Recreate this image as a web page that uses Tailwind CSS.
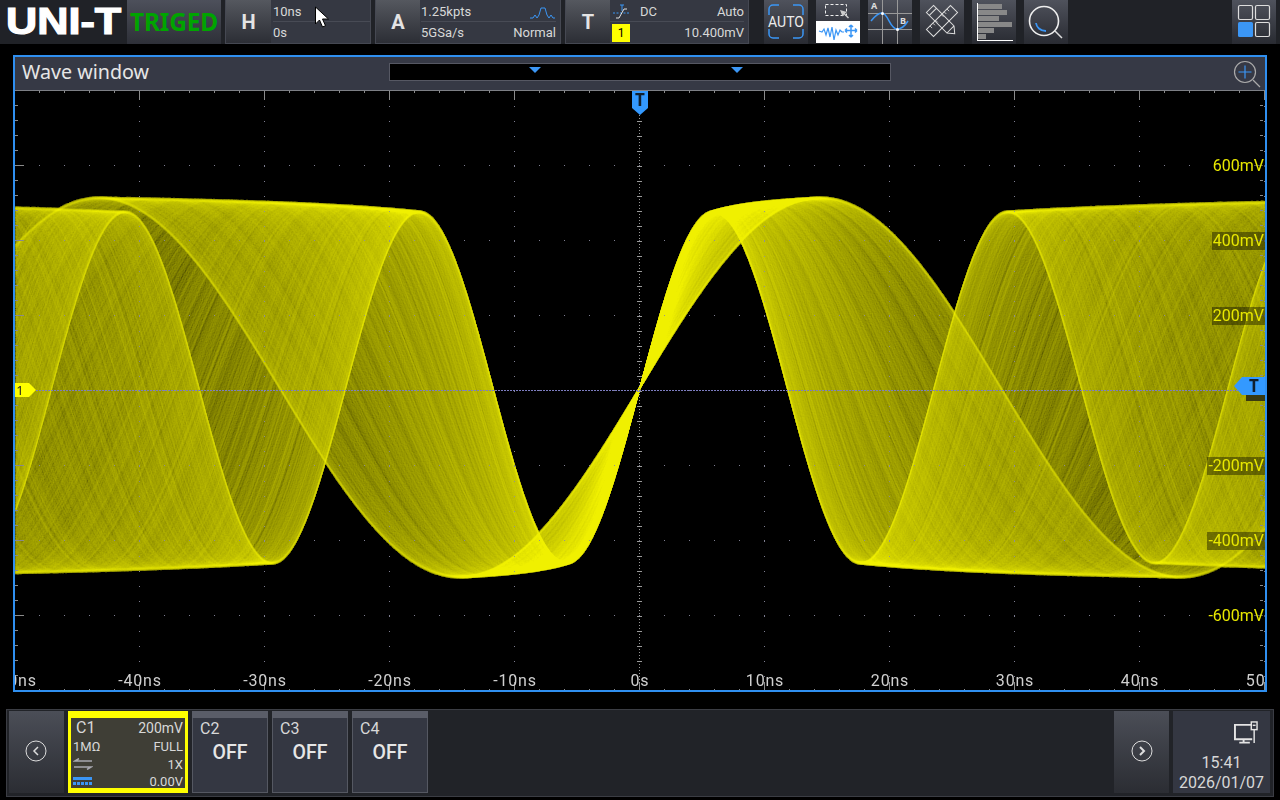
<!DOCTYPE html>
<html lang="en">
<head>
  <meta charset="UTF-8">
  <title>Wave window</title>
  <script src="https://cdn.jsdelivr.net/npm/@tailwindcss/browser@4"></script>
</head>
<body class="w-[1280px] h-[800px] overflow-hidden bg-black font-['Roboto',sans-serif] text-[#d8d8d8]">

  <!-- Top bar -->
  <div class="relative flex h-[44px] bg-[#202227]">
    <div class="w-[127px] h-full overflow-hidden flex items-center">
      <span class="ml-[6px] origin-left scale-x-[1.2] font-['Liberation_Sans',sans-serif] font-bold text-[36px] leading-none [-webkit-text-stroke:1.2px_white] text-white">UNI-T</span>
    </div>
    <div class="w-[94px] h-full bg-gradient-to-b from-[#4d505b] to-[#2e3038] flex items-center justify-center">
      <span class="font-['Noto_Sans',sans-serif] font-bold text-[24.500px] text-[#00a400] tracking-[-0.2px]">TRIGED</span>
    </div>

    <!-- H -->
    <div class="ml-[4px] w-[146px] h-full flex bg-[#353842] border border-[#454852] border-t-0">
      <div class="w-[45px] bg-gradient-to-b from-[#55585f] to-[#2c2e35] flex items-center justify-center text-[20px] font-bold text-[#e4e4e4]">H</div>
      <div class="flex-1 flex flex-col text-[13px] pl-[2px]">
        <div class="h-[22px] pt-[2px] flex items-center border-b border-[#484b55]">10ns</div>
        <div class="h-[21px] pt-[1px] flex items-center">0s</div>
      </div>
    </div>

    <!-- A -->
    <div class="ml-[4px] w-[186px] h-full flex bg-[#353842] border border-[#454852] border-t-0">
      <div class="w-[44px] bg-gradient-to-b from-[#55585f] to-[#2c2e35] flex items-center justify-center text-[20px] font-bold text-[#e4e4e4]">A</div>
      <div class="flex-1 flex flex-col text-[13px] pl-[1px] pr-[4px]">
        <div class="h-[22px] pt-[2px] flex items-center justify-between border-b border-[#484b55]">
          <span>1.25kpts</span>
          <svg width="26" height="14" viewBox="0 0 26 14" fill="none" stroke="#3b96f5" stroke-width="1"><path d="M0 13h3l2-3 2 3 2-3 2-7h4l2 7 2 3 2-3 2 3h2"/></svg>
        </div>
        <div class="h-[21px] pt-[1px] flex items-center justify-between"><span>5GSa/s</span><span>Normal</span></div>
      </div>
    </div>

    <!-- T -->
    <div class="ml-[4px] w-[184px] h-full flex bg-[#353842] border border-[#454852] border-t-0">
      <div class="w-[44px] bg-gradient-to-b from-[#55585f] to-[#2c2e35] flex items-center justify-center text-[20px] font-bold text-[#e4e4e4]">T</div>
      <div class="flex-1 flex flex-col text-[13px] pr-[4px]">
        <div class="h-[22px] pt-[2px] flex items-center justify-between border-b border-[#484b55]">
          <span class="flex items-center gap-[10px] ml-[3px]">
            <svg width="17" height="16" viewBox="0 0 17 16" fill="none"><path d="M0 9h17" stroke="#3b96f5" stroke-dasharray="2 1.5"/><path d="M7 1h4M9 1v6" stroke="#3b96f5"/><path d="M3 14h3l5-9h3" stroke="#e0e0e0"/></svg>
            <span>DC</span>
          </span>
          <span>Auto</span>
        </div>
        <div class="h-[21px] flex items-center justify-between">
          <span class="ml-[2px] w-[18px] h-[18px] bg-[#ffff00] text-black text-[12px] flex items-center justify-center">1</span>
          <span>10.400mV</span>
        </div>
      </div>
    </div>

    <!-- Tool icons -->
    <div class="ml-[15px] flex gap-[8px] h-full">
      <div class="relative w-[44px] h-full bg-gradient-to-b from-[#4f525c] to-[#292b32] flex items-center justify-center">
        <svg class="absolute inset-0" width="44" height="44" viewBox="0 0 44 44" fill="none" stroke="#3b96f5" stroke-width="1.500"><path d="M5 15V9a4 4 0 0 1 4-4h6M29 5h6a4 4 0 0 1 4 4v6M5 29v5a4 4 0 0 0 4 4h6M29 38h6a4 4 0 0 0 4-4v-5"/></svg>
        <span class="relative text-[14px] text-[#ececec]">AUTO</span>
      </div>
      <div class="w-[44px] h-full flex flex-col">
        <div class="h-[21px] bg-gradient-to-b from-[#4f525c] to-[#383a43]">
          <svg width="44" height="21" viewBox="0 0 44 21" fill="none" stroke="#eee"><rect x="9.500" y="4.500" width="21" height="11" stroke-dasharray="3 2"/><path d="M24 10l7 2-2 1.500 4 4-1 1-4-4-1.500 2z" fill="#ccc" stroke="none"/></svg>
        </div>
        <div class="h-[22px] bg-white">
          <svg width="44" height="22" viewBox="0 0 44 22" fill="none" stroke="#3b96f5"><path d="M3 10l3 1 2-3 2 6 2-7 2 9 2-10 2 13 2-10 2 5 2-5 2 2h2" stroke-width="1.200"/><path d="M29 9.500h12M35 4v12M29 9.500l2-2M29 9.500l2 2M41 9.500l-2-2M41 9.500l-2 2M35 4l-2 2M35 4l2 2M35 16l-2-2M35 16l2-2" stroke-width="1.500"/></svg>
        </div>
      </div>
      <div class="w-[44px] h-full bg-gradient-to-b from-[#4f525c] to-[#292b32]">
        <svg width="44" height="44" viewBox="0 0 44 44" fill="none">
          <path d="M0 13.500h44M0 29.500h44M14.500 0v44M29.500 0v44" stroke="#999"/>
          <path d="M3 21c4-5 7-8 11-8 6 0 8 16 15 16 5 0 8-3 11-8" stroke="#3b96f5" stroke-width="1.500"/>
          <circle cx="14.500" cy="13.500" r="1.500" fill="#fff"/><circle cx="29.500" cy="29.500" r="1.500" fill="#fff"/>
          <text x="3" y="9" font-size="9" fill="#ddd" font-family="Noto Sans, sans-serif" font-weight="700">A</text>
          <text x="32" y="24" font-size="9" fill="#ddd" font-family="Noto Sans, sans-serif" font-weight="700">B</text>
        </svg>
      </div>
      <div class="w-[44px] h-full bg-gradient-to-b from-[#4f525c] to-[#292b32]">
        <svg width="44" height="44" viewBox="0 0 44 44" fill="none" stroke="#ddd">
          <g transform="rotate(-45 22 21)"><rect x="5" y="16" width="34" height="10"/><path d="M10 16v3M14 16v3M18 16v3M26 16v3M30 16v3M34 16v3" stroke-width=".8"/></g>
          <g transform="rotate(45 22 21)"><path d="M5 16h29l6 5-6 5H5zM34 16v10M9 16v10"/></g>
        </svg>
      </div>
      <div class="w-[44px] h-full bg-gradient-to-b from-[#4f525c] to-[#292b32] relative">
        <div class="absolute left-[5px] top-[3px] h-[38px] w-[36px] border-l border-b border-white flex flex-col justify-end pb-[1px] gap-[1px]">
          <div class="h-[5px] w-[24px] bg-[#888]"></div>
          <div class="h-[5px] w-[29px] bg-[#888]"></div>
          <div class="h-[5px] w-[21px] bg-[#888]"></div>
          <div class="h-[5px] w-[34px] bg-[#888]"></div>
          <div class="h-[5px] w-[16px] bg-[#888]"></div>
          <div class="h-[5px] w-[8px] bg-[#888]"></div>
        </div>
      </div>
      <div class="w-[44px] h-full bg-gradient-to-b from-[#4f525c] to-[#292b32]">
        <svg width="44" height="44" viewBox="0 0 44 44" fill="none">
          <circle cx="20" cy="21" r="14.500" stroke="#eee" stroke-width="1.600"/>
          <path d="M31 31l7 7" stroke="#ddd" stroke-width="1.500"/>
          <path d="M12 23c.5 4 4 8 10 8" stroke="#3b96f5" stroke-width="1.800"/>
        </svg>
      </div>
    </div>

    <div class="absolute left-[1232px] top-0 w-[44px] h-full bg-gradient-to-b from-[#4f525c] to-[#292b32]">
      <svg width="44" height="44" viewBox="0 0 44 44" fill="none" stroke="#ddd" stroke-width="1.200">
        <rect x="6.500" y="5.500" width="14" height="14" rx="1.500"/>
        <rect x="23.500" y="5.500" width="14" height="14" rx="1.500"/>
        <rect x="6" y="22" width="15" height="15" rx="1.500" fill="#3b96f5" stroke="none"/>
        <rect x="23.500" y="22.500" width="14" height="14" rx="1.500"/>
      </svg>
    </div>

    <!-- mouse pointer -->
    <svg class="absolute left-[314px] top-[6px]" width="18" height="24" viewBox="0 0 18 24"><path d="M1.500 1v17l4-4 3 7 3-1.300-3-6.700h6z" fill="#fff" stroke="#000"/></svg>
  </div>

  <!-- Wave window -->
  <div class="mt-[11px] ml-[13px] w-[1254px] h-[637px] border-2 border-[#2f8ff0] flex flex-col">
    <div class="relative h-[33px] bg-[#363945] flex items-center pl-[7px] border-b border-[#7d7f85] box-content">
      <span class="mb-[4px] font-['Noto_Sans',sans-serif] text-[19.700px] leading-none text-[#e6e6e6]">Wave window</span>
      <div class="absolute left-[374px] top-[6px] w-[502px] h-[18px] bg-black border border-[#565863]">
        <div class="absolute left-[139px] top-[3px] w-0 h-0 border-x-[6px] border-x-transparent border-t-[6px] border-t-[#3b96f5]"></div>
        <div class="absolute left-[341px] top-[3px] w-0 h-0 border-x-[6px] border-x-transparent border-t-[6px] border-t-[#3b96f5]"></div>
      </div>
      <svg class="absolute left-[1216px] top-[1px]" width="32" height="32" viewBox="0 0 32 32" fill="none">
        <circle cx="14" cy="14" r="10.500" stroke="#aaa" stroke-width="1.200"/>
        <path d="M22 22l7 7" stroke="#aaa" stroke-width="1.200"/>
        <path d="M7.500 14h13M14 7.500v13" stroke="#3b96f5" stroke-width="1.200"/>
      </svg>
    </div>

    <div class="relative flex-1 overflow-hidden bg-black">
      <canvas id="wave" width="1250" height="600" class="absolute left-0 top-0"></canvas>

      <!-- vertical scale -->
      <span class="absolute right-0 top-[66px] px-[1px] bg-black/40 text-[16px] leading-[18px] text-[#e8e800]">600mV</span>
      <span class="absolute right-0 top-[141px] px-[1px] bg-black/40 text-[16px] leading-[18px] text-[#e8e800]">400mV</span>
      <span class="absolute right-0 top-[216px] px-[1px] bg-black/40 text-[16px] leading-[18px] text-[#e8e800]">200mV</span>
      <span class="absolute right-0 top-[366px] px-[1px] bg-black/40 text-[16px] leading-[18px] text-[#e8e800]">-200mV</span>
      <span class="absolute right-0 top-[441px] px-[1px] bg-black/40 text-[16px] leading-[18px] text-[#e8e800]">-400mV</span>
      <span class="absolute right-0 top-[516px] px-[1px] bg-black/40 text-[16px] leading-[18px] text-[#e8e800]">-600mV</span>

      <!-- time scale -->
      <span class="absolute left-[0px] bottom-[-1px] -translate-x-1/2 text-[16px] tracking-[0.8px] leading-[20px] text-[#cfcfcf]">-50ns</span>
      <span class="absolute left-[125px] bottom-[-1px] -translate-x-1/2 text-[16px] tracking-[0.8px] leading-[20px] text-[#cfcfcf]">-40ns</span>
      <span class="absolute left-[250px] bottom-[-1px] -translate-x-1/2 text-[16px] tracking-[0.8px] leading-[20px] text-[#cfcfcf]">-30ns</span>
      <span class="absolute left-[375px] bottom-[-1px] -translate-x-1/2 text-[16px] tracking-[0.8px] leading-[20px] text-[#cfcfcf]">-20ns</span>
      <span class="absolute left-[500px] bottom-[-1px] -translate-x-1/2 text-[16px] tracking-[0.8px] leading-[20px] text-[#cfcfcf]">-10ns</span>
      <span class="absolute left-[625px] bottom-[-1px] -translate-x-1/2 text-[16px] tracking-[0.8px] leading-[20px] text-[#cfcfcf]">0s</span>
      <span class="absolute left-[750px] bottom-[-1px] -translate-x-1/2 text-[16px] tracking-[0.8px] leading-[20px] text-[#cfcfcf]">10ns</span>
      <span class="absolute left-[875px] bottom-[-1px] -translate-x-1/2 text-[16px] tracking-[0.8px] leading-[20px] text-[#cfcfcf]">20ns</span>
      <span class="absolute left-[1000px] bottom-[-1px] -translate-x-1/2 text-[16px] tracking-[0.8px] leading-[20px] text-[#cfcfcf]">30ns</span>
      <span class="absolute left-[1125px] bottom-[-1px] -translate-x-1/2 text-[16px] tracking-[0.8px] leading-[20px] text-[#cfcfcf]">40ns</span>
      <span class="absolute left-[1250px] bottom-[-1px] -translate-x-1/2 text-[16px] tracking-[0.8px] leading-[20px] text-[#cfcfcf]">50ns</span>

      <!-- markers -->
      <svg class="absolute left-[617px] top-0" width="16" height="24" viewBox="0 0 16 24">
        <path d="M0 0h16v17l-8 7-8-7z" fill="#3399ff"/>
        <text x="8" y="15" text-anchor="middle" font-size="17" font-weight="700" fill="#10202f" font-family="Noto Sans, sans-serif">T</text>
      </svg>
      <svg class="absolute left-[-3px] top-[292px]" width="24" height="14" viewBox="0 0 24 14">
        <path d="M0 0h17l7 7-7 7H0z" fill="#ffff00"/>
        <text x="8" y="11.500" text-anchor="middle" font-size="13" fill="#222" font-family="Noto Sans, sans-serif">1</text>
      </svg>
      <div class="absolute right-0 top-[304px] w-[19px] h-[6px] bg-[#3a3a10]"></div>
      <svg class="absolute right-0 top-[286px]" width="31" height="18" viewBox="0 0 31 18">
        <path d="M0 9l8-9h23v18H8z" fill="#3399ff"/>
        <text x="20" y="15" text-anchor="middle" font-size="17" font-weight="700" fill="#10202f" font-family="Noto Sans, sans-serif">T</text>
      </svg>
    </div>
  </div>

  <!-- Bottom bar -->
  <div class="relative mt-[17px] ml-[6px] w-[1268px] h-[88px] bg-[#212328] border border-[#3b3d44] flex pl-[2px] pt-[1px]">
    <div class="w-[55px] h-[82px] pb-[2px] pr-[1px] bg-gradient-to-b from-[#4b4e57] to-[#2b2d33] flex items-center justify-center">
      <svg width="22" height="22" viewBox="0 0 22 22" fill="none" stroke="#ddd"><circle cx="11" cy="11" r="10" stroke-width="1"/><path d="M13 7l-4 4 4 4" stroke-width="1.500"/></svg>
    </div>

    <div class="ml-[4px] w-[120px] h-[82px] bg-[#3f3e36] border-x-[3px] border-b-[5px] border-t-[7px] border-[#ffff00] px-[2px] text-[#d8d8d8]">
      <div class="flex justify-between items-center h-[20px] text-[14px] leading-none"><span class="ml-[3px] text-[16px]">C1</span><span>200mV</span></div>
      <div class="flex justify-between items-center h-[17px] text-[13px] leading-none"><span>1MΩ</span><span>FULL</span></div>
      <div class="flex justify-between items-center h-[18px] text-[13px] leading-none">
        <svg width="20" height="12" viewBox="0 0 20 12" fill="none" stroke="#a8a8b0" stroke-width="1.500"><path d="M19 3H2l4-2.500M1 9h17l-4 2.500"/></svg>
        <span>1X</span>
      </div>
      <div class="flex justify-between items-center h-[16px] text-[13px] leading-none">
        <div class="w-[19px] flex flex-col gap-[2px]"><div class="h-[3px] bg-[#3b96f5]"></div><div class="h-[3px] bg-[repeating-linear-gradient(90deg,#3b96f5_0_3px,transparent_3px_4px)]"></div></div>
        <span>0.00V</span>
      </div>
    </div>

    <div class="ml-[4px] w-[76px] h-[82px] bg-[#343742] border border-t-0 border-[#555862] flex flex-col">
      <div class="h-[7px] -mx-[1px] bg-[#5a5d68]"></div>
      <div class="pl-[7px] text-[16px] leading-[22px]">C2</div>
      <div class="mt-[1px] text-center text-[19.500px] leading-[24px] font-medium text-[#e6e6e6]">OFF</div>
    </div>
    <div class="ml-[4px] w-[76px] h-[82px] bg-[#343742] border border-t-0 border-[#555862] flex flex-col">
      <div class="h-[7px] -mx-[1px] bg-[#5a5d68]"></div>
      <div class="pl-[7px] text-[16px] leading-[22px]">C3</div>
      <div class="mt-[1px] text-center text-[19.500px] leading-[24px] font-medium text-[#e6e6e6]">OFF</div>
    </div>
    <div class="ml-[4px] w-[76px] h-[82px] bg-[#343742] border border-t-0 border-[#555862] flex flex-col">
      <div class="h-[7px] -mx-[1px] bg-[#5a5d68]"></div>
      <div class="pl-[7px] text-[16px] leading-[22px]">C4</div>
      <div class="mt-[1px] text-center text-[19.500px] leading-[24px] font-medium text-[#e6e6e6]">OFF</div>
    </div>

    <div class="ml-auto w-[55px] h-[82px] pb-[2px] bg-gradient-to-b from-[#4b4e57] to-[#2b2d33] flex items-center justify-center">
      <svg width="22" height="22" viewBox="0 0 22 22" fill="none" stroke="#ddd"><circle cx="11" cy="11" r="10" stroke-width="1"/><path d="M9 7l4 4-4 4" stroke-width="2"/></svg>
    </div>
    <div class="ml-[4px] mr-[3px] w-[97px] h-[82px] bg-[#343742] flex flex-col items-center">
      <svg class="self-end mr-[11px] mt-[10px] mb-[8px]" width="26" height="25" viewBox="0 0 26 25" fill="none" stroke="#e4e4e4">
        <path d="M19 4H1.500v15h18" stroke-width="2"/>
        <path d="M10.500 19v3M6 22.500h11" stroke-width="2"/>
        <rect x="18.500" y="1" width="6" height="8" stroke-width="1.500"/>
        <path d="M20 4.500h3" stroke-width="1.500"/>
        <path d="M21.500 9v14" stroke-width="1.500"/>
      </svg>
      <div class="text-[16px] leading-[20px]">15:41</div>
      <div class="text-[16px] leading-[20px]">2026/01/07</div>
    </div>
  </div>

  <script>
    // phosphor style drawing of the swept sine, cursor at 0s is x=624 in canvas coords
    const canvas = document.getElementById('wave');
    const ctx = canvas.getContext('2d');
    const W = canvas.width, H = canvas.height;
    const hits = new Float32Array(W * H);

    let seed = 12345;
    function rnd() {
      seed = (seed * 1664525 + 1013904223) >>> 0;
      return seed / 4294967296;
    }

    const X0 = 624, Y0 = 296;
    const F_HI = 1 / 294, F_LO = 1 / 722;
    const TRACES = 6000;

    for (let n = 0; n < TRACES; n++) {
      // mostly a flat sweep, a few traces dwell at the two ends for the bright edges
      let u = rnd();
      const pick = rnd();
      if (pick < 0.09) u = Math.pow(u, 3.5);
      else if (pick < 0.18) u = 1 - Math.pow(u, 3.5);
      const f = F_HI + (F_LO - F_HI) * u;
      const amp = 175.5 + 14 * u;
      const off = (rnd() - 0.5) * 1.2;
      let prev = null;
      for (let x = 0; x < W; x++) {
        const y = Y0 + off - amp * Math.sin(2 * Math.PI * f * (x - X0)) + (rnd() - 0.5) * 2.2;
        if (prev === null) prev = y;
        const a = Math.round(Math.min(prev, y));
        const b = Math.round(Math.max(prev, y));
        for (let p = a; p <= b; p++) {
          if (p >= 0 && p < H) hits[p * W + x] += 1;
        }
        prev = y;
      }
    }

    const img = ctx.createImageData(W, H);
    for (let i = 0; i < hits.length; i++) {
      const h = hits[i];
      const o = i * 4;
      img.data[o + 3] = 255;
      if (h > 0) {
        const v = Math.max(0, Math.min(240, 29 * Math.log2(1 + h) + 5));
        img.data[o] = v;
        img.data[o + 1] = v;
      }
    }
    ctx.putImageData(img, 0, 0);

    // graticule
    ctx.fillStyle = 'rgba(140,140,160,0.9)';
    for (let gx = -1; gx <= W; gx += 125) {
      for (let y = 0; y < H; y += 15) ctx.fillRect(gx, y, 1, 1);
    }
    for (let gy = -1; gy <= H; gy += 75) {
      for (let x = -1; x < W; x += 25) ctx.fillRect(x, gy, 1, 1);
    }
    // border ticks
    ctx.fillStyle = '#8a8a8a';
    for (let x = -1; x < W; x += 25) {
      const len = (x + 1) % 125 === 0 ? 9 : 2;
      ctx.fillRect(x, 0, 1, len);
      ctx.fillRect(x, H - len, 1, len);
    }
    for (let y = -1; y < H; y += 15) {
      const len = (y + 1) % 75 === 0 ? 9 : 3;
      ctx.fillRect(0, y, len, 1);
      ctx.fillRect(W - len - 2, y, len, 1);
    }
    // centre axes
    ctx.fillStyle = '#9a9a9a';
    for (let y = 24; y < H; y += 3) ctx.fillRect(X0, y, 1, 1);
    for (let y = Y0 + 4, k = 0; y > 20; y -= 15, k++) {
      ctx.fillRect(X0 - 2, y, 5, 1);
      ctx.fillRect(X0 - 2, 2 * Y0 - y + 8, 5, 1);
    }
    ctx.fillStyle = '#7d7dc0';
    for (let x = 0; x < W - 24; x += 3) ctx.fillRect(x, Y0 + 3, 2, 1);
  </script>
</body>
</html>
